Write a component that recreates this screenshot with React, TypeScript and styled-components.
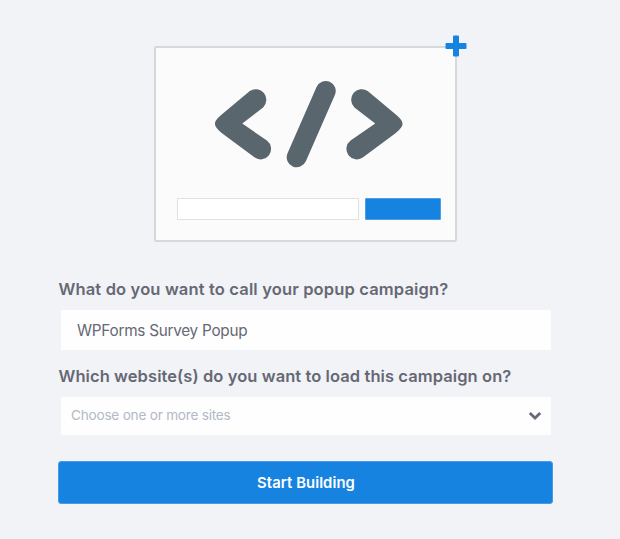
import React, { useState } from "react";
import styled, { createGlobalStyle } from "styled-components";

const GlobalStyle = createGlobalStyle`
  *, *::before, *::after { box-sizing: border-box; }
  body {
    margin: 0;
    background: #f1f3f7;
    font-family: Inter, "Liberation Sans", sans-serif;
  }
`;

const Page = styled.main`
  display: flex;
  flex-direction: column;
  height: 539px;
  padding: 46px 66px 0 58px;
  overflow: hidden;
`;

const Preview = styled.div`
  position: relative;
  display: flex;
  flex-direction: column;
  width: 303px;
  height: 196px;
  margin-left: 96.3px;
  border: 2px solid #d6d8d9;
  border-radius: 2px;
  background: #fbfbfb;
`;

const CodeMark = styled.svg`
  display: block;
  width: 190px;
  height: 88px;
  margin: 32px 0 0 57.7px;
  flex: none;
`;

const PlusMark = styled.svg`
  position: absolute;
  top: -12.6px;
  right: -12px;
  width: 22px;
  height: 22px;
`;

const PreviewForm = styled.div`
  display: flex;
  gap: 6px;
  margin: 30px 0 0 20.7px;
`;

const PreviewField = styled.div`
  width: 182px;
  height: 22px;
  border: 1px solid #e1e2e2;
  background: #fff;
`;

const PreviewButton = styled.div`
  width: 76px;
  height: 22px;
  border: 1px solid #4b9ee7;
  border-radius: 1px;
  background: #1783e1;
`;

const Label = styled.label<{ $gap: number; $spacing: number }>`
  height: 24px;
  margin-top: ${(p) => p.$gap}px;
  padding-left: 0.5px;
  color: #666874;
  font-size: 16.5px;
  font-weight: 600;
  line-height: 24px;
  letter-spacing: ${(p) => p.$spacing}px;
  white-space: nowrap;
`;

const NameInput = styled.input`
  width: 490px;
  height: 40px;
  margin: 9px 0 0 3px;
  padding: 0 16px;
  border: 0;
  outline: 0;
  border-radius: 1px;
  background: #fefefe;
  color: #666874;
  font: 400 15.3px Inter, "Liberation Sans", sans-serif;
  letter-spacing: -0.26px;
`;

const SiteSelect = styled.button`
  display: flex;
  align-items: center;
  justify-content: space-between;
  width: 490px;
  height: 38px;
  margin: 9px 0 0 3px;
  padding: 0 9px 2px 10px;
  border: 0;
  border-radius: 1px;
  background: #fefefe;
  color: #b2b9c7;
  font: 400 13.6px Inter, "Liberation Sans", sans-serif;
  letter-spacing: -0.22px;
`;

const Chevron = styled.svg`
  width: 14px;
  height: 10px;
  margin-top: 2px;
`;

const StartButton = styled.button`
  width: 495px;
  height: 43px;
  margin: 26px 0 0 0;
  padding: 1px 0 0 1px;
  border: 1px solid #459be7;
  border-radius: 3px;
  background: #1783e1;
  color: #fff;
  font: 600 14.8px Inter, "Liberation Sans", sans-serif;
  letter-spacing: 0.1px;
`;

const bracket =
  "M249.8 91 A10.6 10.6 0 0 1 263.1 107.4 L242.3 123.6 L266.9 140.6 A10.4 10.4 0 0 1 254.4 157.3 L222 133.2 C212.6 125.6 212.6 122 222 114.2 Z";

export default function App() {
  const [name, setName] = useState("WPForms Survey Popup");
  return (
    <>
      <GlobalStyle />
      <Page>
        <Preview>
          <CodeMark viewBox="214 80 190 88" fill="#5a666e" aria-hidden="true">
            <path d={bracket} />
            <path d="M325.7 91 L296.7 157.3" stroke="#5a666e" strokeWidth="20" strokeLinecap="round" />
            <path d={bracket} transform="translate(617.5 0) scale(-1 1)" />
          </CodeMark>
          <PreviewForm>
            <PreviewField />
            <PreviewButton />
          </PreviewForm>
          <PlusMark viewBox="0 0 22 22" fill="#1783e1" aria-hidden="true">
            <rect x="0.5" y="8" width="21" height="6" rx="1" />
            <rect x="8" y="0.5" width="6" height="21" rx="1" />
          </PlusMark>
        </Preview>
        <Label htmlFor="campaign-name" $gap={35} $spacing={0.15}>
          What do you want to call your popup campaign?
        </Label>
        <NameInput id="campaign-name" value={name} onChange={(e) => setName(e.target.value)} />
        <Label htmlFor="sites" $gap={14} $spacing={0.08}>
          Which website(s) do you want to load this campaign on?
        </Label>
        <SiteSelect id="sites" type="button">
          Choose one or more sites
          <Chevron viewBox="0 0 14 10" fill="none" stroke="#666b78" strokeWidth="2.8" aria-hidden="true">
            <path d="M1.8 2 L7 7 L12.2 2" />
          </Chevron>
        </SiteSelect>
        <StartButton type="button">Start Building</StartButton>
      </Page>
    </>
  );
}
